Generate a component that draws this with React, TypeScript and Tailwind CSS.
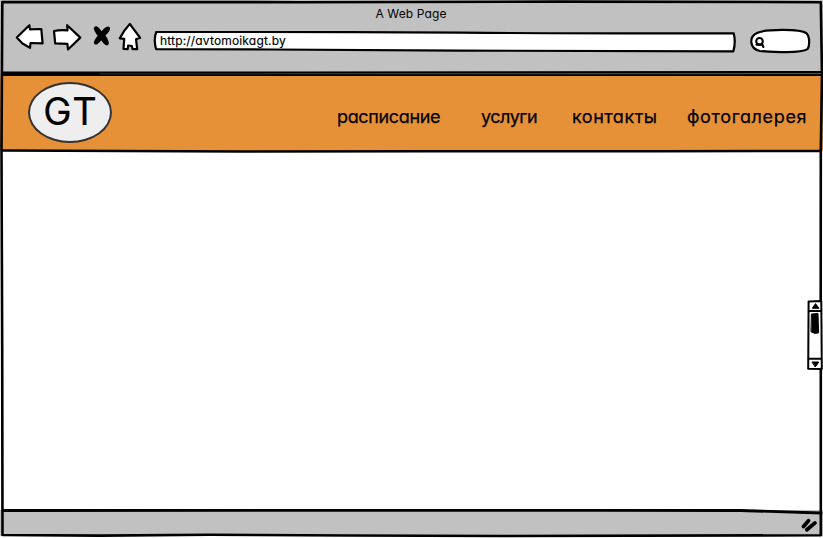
import React from "react";

const strokeProps = {
  fill: "none",
  stroke: "#000",
  strokeLinecap: "round" as const,
  strokeLinejoin: "round" as const,
};

function Toolbar() {
  return (
    <header className="flex h-[75px] flex-col bg-[#c1c1c1]">
      <h1 className="h-[26px] pr-[1px] pt-[5px] text-center text-[12px] leading-[18px] tracking-[0.12px]">A Web Page</h1>
      <div className="flex h-[34px] items-center">
        <svg className="h-[34px] w-[153px] shrink-0 overflow-visible" viewBox="0 26 153 34" {...strokeProps} strokeWidth="2.2">
          <path fill="#fff" d="M16.8 37.5 L29.3 25.2 L30 29.4 L41.3 29 L42.6 43.3 L30.5 43 L30 47.8 L22.5 43.5 Z" />
          <path fill="#fff" d="M54 31 Q60 29.6 67.5 30.3 L67.2 25.2 L80.3 37.6 L68 49.5 L67.4 43.8 L55.2 43.4 Z" />
          <path fill="#000" strokeWidth="1.4" d="M94.5 28 Q97 24.8 101.5 32.4 Q107 25.4 109.3 28 Q110 30.3 104.6 35.5 Q109.7 43 107.4 44.6 Q105 45.4 101.3 39.2 Q96.5 45.8 94.6 43 Q94 41.5 98.6 35.8 Q94.2 30 94.5 28 Z" />
          <path fill="#fff" d="M129.8 24 L140.2 37.8 L136 39.2 L137.2 49.2 L132.6 49.2 L131.8 46 L128.2 45.5 L127.7 49.2 L123.5 49 L124.2 38.8 L119.8 38.3 Q124 30 129.8 24 Z" />
        </svg>
        <div className="relative flex h-[24px] w-[583px] shrink-0 items-center">
          <svg className="absolute inset-0 h-[24px] w-[583px]" viewBox="153 31 583 24" {...strokeProps} strokeWidth="2.2">
            <path fill="#fff" d="M156.3 32 Q300 31.6 460 32.7 T733.7 33.3 Q736 42 733.3 51.4 L460 50.6 L270 49.5 L156 49.1 Q153.4 39 156.3 32 Z" />
          </svg>
          <span className="relative ml-[7px] mt-[-4px] text-[12px] leading-[16px] tracking-[0.17px] [-webkit-text-stroke:0.15px_#000]">http://avtomoikagt.by</span>
        </div>
        <svg className="ml-[13px] h-[30px] w-[64px] shrink-0" viewBox="749 28 64 30" {...strokeProps} strokeWidth="2.2">
          <path fill="#fff" d="M757 33 C764 29.2 800 28.6 806.5 33.3 C810 37 809.8 46 807.5 49.2 C801 53.6 778 52.3 760 51 C749.5 49 748.5 37 757 33 Z" />
          <circle cx="759.5" cy="41.3" r="3.3" strokeWidth="2.1" />
          <path strokeWidth="2.1" d="M756.5 44.8 L762.3 44.4 L763.4 47" />
        </svg>
      </div>
    </header>
  );
}

function Navigation() {
  return (
    <nav className="flex h-[76px] bg-[#e69138]">
      <a className="ml-[28px] mt-[7px] flex h-[61px] w-[84px] shrink-0 items-center justify-center rounded-[50%] border-2 border-[#333] bg-[#eee] pb-[3px] pl-[2px]">
        <span className="text-[38px] leading-none tracking-[2px] [-webkit-text-stroke:0.2px_#000]">GT</span>
      </a>
      <div className="ml-[225px] flex pt-[30px] text-[18px] leading-[24px] [-webkit-text-stroke:0.25px_#000]">
        <a className="w-[144px] tracking-[-0.35px]">расписание</a>
        <a className="w-[91px] tracking-[-0.5px]">услуги</a>
        <a className="w-[115px] tracking-[0.5px]">контакты</a>
        <a className="w-[121px] tracking-[0.65px]">фотогалерея</a>
      </div>
    </nav>
  );
}

function Scrollbar() {
  return (
    <svg className="mt-[148px] h-[72px] w-[17px]" viewBox="806 299 17 72" {...strokeProps} strokeWidth="2">
      <path fill="#fff" d="M808.6 301.5 L821.3 301 L821.8 369 L808.2 368.7 Z" />
      <path d="M809 311 H821 M809 358.8 H821" />
      <path fill="#000" strokeWidth="1" d="M812.5 308 L815.5 303.6 L818.8 308 Z M812.3 362 L818.8 362 L815.5 366.7 Z" />
      <path fill="#000" strokeWidth="1" d="M811.8 314 L818 313.5 L818.6 332.8 Q815 334.5 811.3 332 Z" />
    </svg>
  );
}

function WindowFrame() {
  return (
    <svg className="pointer-events-none absolute inset-0 h-[538px] w-[823px]" viewBox="0 0 823 538" {...strokeProps} strokeWidth="2.6">
      <path d="M2.3 2 L300 2.2 L560 1.6 L820.8 2.2 L822 75 L820.8 150 L820.7 300 M820.8 369 L820.8 535.3 L500 536 L350 535.5 L210 534.7 L100 535.6 L2.5 535 L2.2 350 L1.5 150 L2.3 2" />
      <path strokeWidth="2.2" d="M3 72.7 L300 72.7 L821 72.1 M3 74.8 L300 75 L822 75" />
      <path stroke="#333" strokeWidth="1" d="M100 73.8 H820" />
      <path strokeWidth="2.4" d="M3 150.5 L240 151.5 L430 151.2 L660 151.2 L821 151" />
      <path strokeWidth="2.8" d="M3 510.5 L400 510.3 L600 510.3 L740 510.5 L821 513" />
    </svg>
  );
}

export default function App() {
  return (
    <div className="relative flex h-[538px] w-[823px] flex-col overflow-hidden bg-white font-['Inter','Noto_Sans',sans-serif] text-black [font-feature-settings:'cv11','ss03']">
      <Toolbar />
      <Navigation />
      <main className="flex h-[359px] justify-end"><Scrollbar /></main>
      <footer className="flex h-[26px] justify-end bg-[#c1c1c1]">
        <svg className="mr-[3px] h-[26px] w-[24px]" viewBox="796 510 24 26" {...strokeProps} strokeWidth="3.8">
          <path d="M803.5 526.5 L808.5 520.8 M806.8 529.8 L815 522.9" />
        </svg>
      </footer>
      <WindowFrame />
    </div>
  );
}
